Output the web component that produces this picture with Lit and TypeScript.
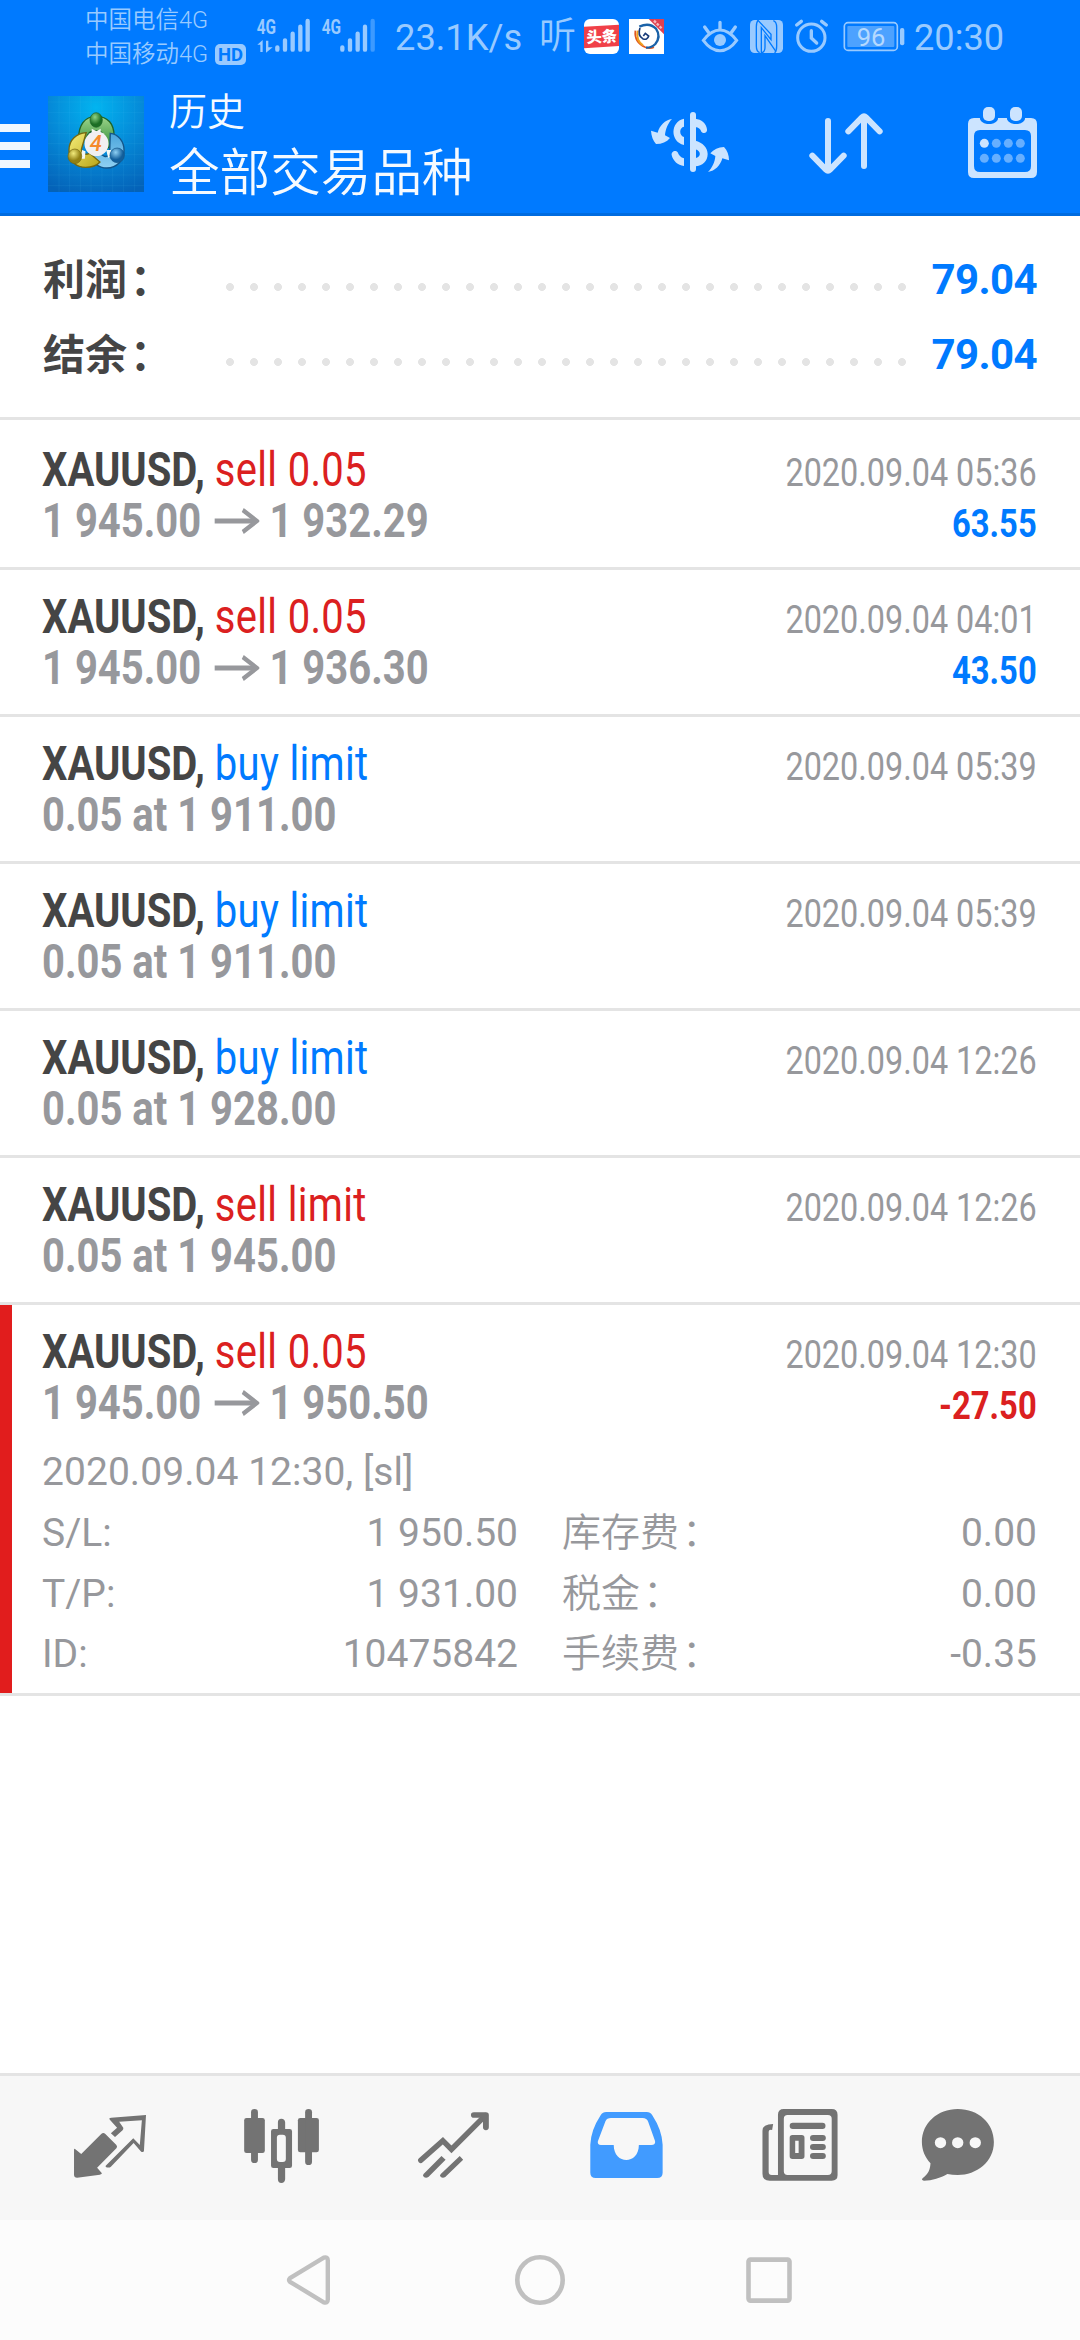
import { LitElement, html, css, svg, nothing } from "lit";
import { customElement, property } from "lit/decorators.js";

interface Detail {
  label: string;
  value: string;
}

interface Deal {
  symbol: string;
  action: string;
  side: "buy" | "sell";
  open: string;
  close?: string;
  time: string;
  profit?: string;
  note?: string;
  left?: Detail[];
  right?: Detail[];
}

const DEALS: Deal[] = [
  { symbol: "XAUUSD,", action: "sell 0.05", side: "sell", open: "1 945.00", close: "1 932.29", time: "2020.09.04 05:36", profit: "63.55" },
  { symbol: "XAUUSD,", action: "sell 0.05", side: "sell", open: "1 945.00", close: "1 936.30", time: "2020.09.04 04:01", profit: "43.50" },
  { symbol: "XAUUSD,", action: "buy limit", side: "buy", open: "0.05 at 1 911.00", time: "2020.09.04 05:39" },
  { symbol: "XAUUSD,", action: "buy limit", side: "buy", open: "0.05 at 1 911.00", time: "2020.09.04 05:39" },
  { symbol: "XAUUSD,", action: "buy limit", side: "buy", open: "0.05 at 1 928.00", time: "2020.09.04 12:26" },
  { symbol: "XAUUSD,", action: "sell limit", side: "sell", open: "0.05 at 1 945.00", time: "2020.09.04 12:26" },
  {
    symbol: "XAUUSD,",
    action: "sell 0.05",
    side: "sell",
    open: "1 945.00",
    close: "1 950.50",
    time: "2020.09.04 12:30",
    profit: "-27.50",
    note: "2020.09.04 12:30, [sl]",
    left: [
      { label: "S/L:", value: "1 950.50" },
      { label: "T/P:", value: "1 931.00" },
      { label: "ID:", value: "10475842" },
    ],
    right: [
      { label: "库存费", value: "0.00" },
      { label: "税金", value: "0.00" },
      { label: "手续费", value: "-0.35" },
    ],
  },
];

@customElement("status-bar")
class StatusBar extends LitElement {
  static styles = css`
    :host {
      display: flex;
      height: 72px;
      color: #99caff;
      font-family: Roboto, "Noto Sans CJK SC", sans-serif;
      white-space: nowrap;
    }
    svg {
      display: block;
      flex: none;
    }
    .carriers {
      width: 171px;
      padding: 3px 0 0 85px;
      font-size: 23.5px;
      font-weight: 350;
      line-height: 34px;
    }
    .line {
      display: flex;
      align-items: center;
    }
    .hd {
      margin-left: 7px;
    }
    .speed {
      width: 144px;
      margin-left: 2px;
      font-size: 36.3px;
      line-height: 75px;
    }
    .listen {
      width: 45px;
      font-size: 37px;
      line-height: 73px;
      font-weight: 350;
    }
    .clock {
      margin-left: 9px;
      font-size: 36.2px;
      line-height: 75px;
    }
  `;

  render() {
    return html`
      <div class="carriers">
        <div class="line">中国电信4G</div>
        <div class="line">
          中国移动4G
          <svg class="hd" width="31" height="21" viewBox="0 0 31 21">
            <rect width="31" height="21" rx="5" fill="#99caff" />
            <text x="15.5" y="17" text-anchor="middle" font-family="Roboto" font-size="18.5" font-weight="700" fill="#007aff">HD</text>
          </svg>
        </div>
      </div>
      <svg width="65" height="72" viewBox="588 0 195 216" fill="#99caff">
        <text x="590" y="101" font-family="Roboto" font-size="61" font-weight="700" textLength="58" lengthAdjust="spacingAndGlyphs">4G</text>
        <path d="M601 156v-22h-9l16-14v36zM618 122h7v20h13l-20 16z" />
        <path d="M652 142v7M675 121v28M698 101v48M721 80v69M743 63v86" stroke="#99caff" stroke-width="13" stroke-linecap="round" />
      </svg>
      <svg width="72" height="72" viewBox="783 0 216 216" fill="#99caff">
        <text x="785" y="101" font-family="Roboto" font-size="61" font-weight="700" textLength="58" lengthAdjust="spacingAndGlyphs">4G</text>
        <path d="M847 142v7M870 121v28M893 101v48M915 80v69" stroke="#99caff" stroke-width="13" stroke-linecap="round" />
        <path d="M938 63v86" stroke="#3d9aff" stroke-width="13" stroke-linecap="round" />
      </svg>
      <span class="speed">23.1K/s</span>
      <span class="listen">听</span>
      <svg width="45" height="72" viewBox="612 0 135 216">
        <rect x="612" y="57" width="105" height="105" rx="18" fill="#fff" />
        <path d="M612 80l105-6v64l-105 7z" fill="#f04048" />
        <text x="665" y="127" text-anchor="middle" font-family="Noto Sans CJK SC" font-size="46" font-weight="900" fill="#fff" transform="rotate(-3 665 110)">头条</text>
      </svg>
      <svg width="71" height="72" viewBox="747 0 213 216" fill="none">
        <rect x="747" y="57" width="105" height="105" fill="#fff" />
        <path d="M806 57h46v46z" fill="#e04050" />
        <path d="M822 62l24 24" stroke="#f6b8bd" stroke-width="7" stroke-dasharray="8 4" />
        <path d="M766 92q-4 36 30 50 14 5 26 0" stroke="#e2571e" stroke-width="5" />
        <path d="M773 92q-6 30 16 44" stroke="#f0a01e" stroke-width="6" />
        <path d="M778 80q30-14 50 6 16 24-2 46-12 12-28 11" stroke="#1a62a8" stroke-width="7" />
        <path d="M780 84q-8 22 8 32 14 6 18-8l-10-8-6 8" stroke="#183a78" stroke-width="5" />
      </svg>
      <svg width="48" height="72" viewBox="54 0 144 216" fill="none" stroke="#99caff" stroke-width="9" stroke-linecap="round">
        <path d="M64 121q24-31 50-31t50 31q-22 31-50 31t-50-31z" />
        <path d="M114 67v20M68 81l13 18M160 81l-13 18" stroke-width="10" />
        <circle cx="114" cy="120" r="18" fill="#99caff" stroke="none" />
      </svg>
      <svg width="44" height="72" viewBox="198 0 132 216">
        <rect x="204" y="60" width="99" height="99" rx="14" fill="#99caff" />
        <path d="M229 60q-6 6-6 20v58q0 16 10 20M278 159q6-6 6-20V82q0-16-10-20" fill="none" stroke="#007aff" stroke-width="4" />
        <path d="M228 61l39 42v16l-29-36v74h4q7-3 7-16v-34l33 48" fill="none" stroke="#007aff" stroke-width="4" />
      </svg>
      <svg width="51" height="72" viewBox="330 0 153 216" fill="none" stroke="#99caff" stroke-linecap="round">
        <circle cx="388" cy="113" r="41" stroke-width="9" />
        <path d="M388 92v22l16 15" stroke-width="10" />
        <path d="M344 75l14-11M433 75l-14-11" stroke-width="10" />
      </svg>
      <svg width="62" height="72" viewBox="483 0 186 216">
        <rect x="487" y="68" width="159" height="83" rx="11" fill="none" stroke="#99caff" stroke-width="5" />
        <rect x="496" y="78" width="141" height="63" rx="3" fill="#4da2ff" />
        <rect x="654" y="84" width="13" height="52" rx="6" fill="#99caff" />
        <text x="567" y="138" text-anchor="middle" font-family="Roboto" font-size="79" textLength="86" lengthAdjust="spacingAndGlyphs" fill="#b4d9ff">96</text>
      </svg>
      <span class="clock">20:30</span>
    `;
  }
}

@customElement("app-header")
class AppHeader extends LitElement {
  static styles = css`
    :host {
      display: flex;
      height: 141px;
      border-bottom: 3px solid #006ce0;
      color: #f5faff;
      font-family: Roboto, "Noto Sans CJK SC", sans-serif;
    }
    svg {
      display: block;
      flex: none;
    }
    .burger {
      width: 30px;
      display: flex;
      flex-direction: column;
      gap: 10px;
      padding-top: 52px;
    }
    .burger i {
      height: 8px;
      background: #f0f7ff;
    }
    .logo {
      margin: 24px 25px 0 18px;
    }
    .titles {
      flex: 1;
      font-weight: 350;
      white-space: nowrap;
    }
    .small {
      margin-top: 18px;
      font-size: 38px;
      line-height: 44px;
    }
    .big {
      font-size: 50.6px;
      line-height: 80px;
    }
    .actions {
      display: flex;
      gap: 66px;
      padding: 25px 33px 0 0;
    }
  `;

  render() {
    return html`
      <div class="burger"><i></i><i></i><i></i></div>
      <svg class="logo" width="96" height="96" viewBox="139 78 279 288" preserveAspectRatio="none">
        <defs>
          <radialGradient id="sky" cx=".5" cy=".12" r=".95">
            <stop offset="0" stop-color="#02b4f0" />
            <stop offset=".5" stop-color="#058ad8" />
            <stop offset="1" stop-color="#0462b8" />
          </radialGradient>
          <linearGradient id="green" x2="0" y2="1">
            <stop offset="0" stop-color="#9fd68c" />
            <stop offset="1" stop-color="#2c8a35" />
          </linearGradient>
          <linearGradient id="yellow" x2="1" y2="1">
            <stop offset="0" stop-color="#f5ee7a" />
            <stop offset="1" stop-color="#b9a416" />
          </linearGradient>
          <linearGradient id="blue" x2="0" y2="1">
            <stop offset="0" stop-color="#4aa5dc" />
            <stop offset="1" stop-color="#8fd0f2" />
          </linearGradient>
          <radialGradient id="ballGreen" cx=".4" cy=".3"><stop offset="0" stop-color="#8fd486" /><stop offset="1" stop-color="#1c6e24" /></radialGradient>
          <radialGradient id="ballYellow" cx=".4" cy=".3"><stop offset="0" stop-color="#f1ea7c" /><stop offset="1" stop-color="#918013" /></radialGradient>
          <radialGradient id="ballBlue" cx=".4" cy=".3"><stop offset="0" stop-color="#8ed0f4" /><stop offset="1" stop-color="#125f9c" /></radialGradient>
        </defs>
        <rect x="139" y="78" width="279" height="288" fill="url(#sky)" />
        <path
          d="M171 78v288M202 78v288M233 78v288M264 78v288M296 78v288M327 78v288M358 78v288M390 78v288M139 96h279M139 127h279M139 159h279M139 190h279M139 221h279M139 253h279M139 284h279M139 315h279M139 347h279"
          stroke="#5cc8f5" stroke-opacity=".14" stroke-width="2"
        />
        <path d="M228 205c0-38 16-66 51-66s52 24 52 58c0 20-8 30-20 38l-18-28c8-14 6-24-14-24s-24 6-28 22z" fill="url(#green)" stroke="#1e6428" stroke-width="4" />
        <path d="M320 190c24 2 40 26 40 50 0 30-20 54-50 54-24 0-44-16-52-42l30-6c8 14 22 18 30 8z" fill="url(#blue)" stroke="#14568a" stroke-width="4" />
        <path d="M250 188c-28 2-50 22-50 52 0 36 24 52 48 52 18 0 32-4 42-16l-30-26c-14 6-24 2-24-12z" fill="url(#yellow)" stroke="#76680f" stroke-width="4" />
        <path d="M266 176l14 8 12-8v12h-26zM238 240l10 4-2 22h-12zM308 240l14 0 0 18-8 6z" fill="#f4f8f4" />
        <ellipse cx="279" cy="150" rx="18" ry="22" fill="url(#ballGreen)" stroke="#1e6428" stroke-width="2" />
        <ellipse cx="217" cy="259" rx="20" ry="22" fill="url(#ballYellow)" stroke="#76680f" stroke-width="2" />
        <ellipse cx="340" cy="256" rx="21" ry="22" fill="url(#ballBlue)" stroke="#14568a" stroke-width="2" />
        <ellipse cx="280" cy="221" rx="35" ry="37" fill="#f1f0f2" />
        <text x="278" y="243" text-anchor="middle" font-family="Roboto" font-size="64" font-style="italic" font-weight="500" fill="#f58a2c">4</text>
      </svg>
      <div class="titles">
        <div class="small">历史</div>
        <div class="big">全部交易品种</div>
      </div>
      <div class="actions">
        <svg width="90" height="90" viewBox="75 81 270 270" fill="#cce4ff">
          <path d="M156 147c-12 12-20 32-21 49l15 8c-10 12-24 18-42 18-9-10-14-24-15-40l20 6c6-22 22-38 43-41z" />
          <path d="M264 306c12-12 21-30 22-48l-15-8c10-12 24-18 41-19 10 10 15 24 15 40l-20-6c-6 22-22 38-43 41z" />
          <path d="M219 135v162" stroke="#cce4ff" stroke-width="18" stroke-linecap="round" />
          <path d="M192 146v24c-14 2-16 26 0 31v24c-42-10-42-70 0-79zM192 288v-23c-10-2-16-9-19-18-6-9-20-3-18 8 4 18 18 30 37 33z" />
          <path d="M226 146c18 2 33 14 35 32 2 11-11 15-17 7-3-8-8-13-18-14zM226 212c22 6 37 20 37 40 0 22-16 36-37 37v-24c18-4 18-22 0-27z" />
        </svg>
        <svg width="90" height="90" viewBox="543 81 270 270" fill="none" stroke="#cce4ff" stroke-width="18" stroke-linecap="round">
          <path d="M624 153v148M577 257l41 42q6 6 12 0l41-42M732 288V140M685 184l41-42q6-6 12 0l41 42" />
        </svg>
        <svg width="90" height="90" viewBox="1011 81 270 270">
          <path fill="#cce4ff" fill-rule="evenodd" d="M1062 144h171q18 0 18 18v144q0 18-18 18h-171q-18 0-18-18V162q0-18 18-18zM1080 180q-18 0-18 18v90q0 18 18 18h135q18 0 18-18v-90q0-18-18-18z" />
          <rect x="1079" y="102" width="56" height="60" rx="22" fill="#007aff" />
          <rect x="1160" y="102" width="56" height="60" rx="22" fill="#007aff" />
          <rect x="1089" y="111" width="36" height="42" rx="15" fill="#cce4ff" />
          <rect x="1170" y="111" width="36" height="42" rx="15" fill="#cce4ff" />
          <circle cx="1093" cy="220" r="13.5" fill="#cce4ff" />
          ${[[1129, 220], [1165, 220], [1201, 220], [1093, 265], [1129, 265], [1165, 265], [1201, 265]].map(
            ([x, y]) => svg`<circle cx=${x} cy=${y} r="13.5" fill="#66afff" />`
          )}
        </svg>
      </div>
    `;
  }
}

@customElement("balance-summary")
class BalanceSummary extends LitElement {
  static styles = css`
    :host {
      display: block;
      height: 204px;
      box-sizing: border-box;
      padding: 26px 43px 0;
      border-bottom: 3px solid #e4e4e4;
      font-family: Roboto, "Noto Sans CJK SC", sans-serif;
      font-size: 42px;
      font-weight: 700;
      line-height: 75px;
    }
    .row {
      display: flex;
      height: 75px;
    }
    .label {
      width: 183px;
      padding-top: 1px;
      color: #454545;
    }
    .colon {
      margin-left: 3px;
    }
    .dots {
      width: 680px;
      height: 8px;
      margin-top: 41px;
      background: radial-gradient(circle at 4px 4px, #e4e4e4 3.6px, transparent 4.3px) 0 0 / 24px 8px repeat-x;
    }
    .value {
      flex: 1;
      text-align: right;
      letter-spacing: -0.6px;
      color: #007aff;
    }
  `;

  render() {
    return html`${["利润", "结余"].map(
      (label) =>
        html`<div class="row"><span class="label">${label}<span class="colon">：</span></span><span class="dots"></span><span class="value">79.04</span></div>`
    )}`;
  }
}

@customElement("deal-row")
class DealRow extends LitElement {
  @property({ attribute: false }) deal!: Deal;

  static styles = css`
    :host {
      display: block;
      border-bottom: 3px solid #e4e4e4;
      color: #97989c;
      font-family: Roboto, "Noto Sans CJK SC", sans-serif;
      white-space: nowrap;
    }
    .body {
      padding: 21px 43px 0 42px;
      height: 123px;
    }
    .open {
      height: 367px;
      border-left: 12px solid #e11d1d;
      padding-left: 30px;
    }
    .main {
      display: flex;
      justify-content: space-between;
      height: 105px;
    }
    .left {
      transform: scaleX(0.833);
      transform-origin: 0 0;
      font-size: 48px;
      line-height: 51px;
      font-weight: 700;
    }
    .right {
      font-size: 39px;
      line-height: 51px;
      padding-top: 4px;
      text-align: right;
    }
    .time {
      transform: scaleX(0.83);
      transform-origin: 100% 0;
    }
    .profit {
      font-weight: 700;
      transform: scaleX(0.84);
      transform-origin: 100% 0;
    }
    .symbol {
      color: #454545;
    }
    .action {
      font-weight: 400;
      letter-spacing: 0.4px;
    }
    .buy {
      color: #007aff;
    }
    .sell {
      color: #db2020;
    }
    .prices {
      display: flex;
      align-items: center;
    }
    .arrow {
      margin: 0 12px 0 16px;
    }
    .note,
    .grid {
      font-size: 39px;
      line-height: 60.7px;
    }
    .note {
      margin-top: 10.5px;
      letter-spacing: 0.05px;
    }
    .grid {
      display: grid;
      grid-template-columns: 476px 475px;
      column-gap: 44px;
      padding-top: 0.6px;
    }
    .pair {
      display: flex;
      justify-content: space-between;
    }
    .fee {
      font-weight: 350;
    }
    .colon {
      margin-left: 3px;
    }
  `;

  render() {
    const d = this.deal;
    return html`
      <div class="body ${d.note ? "open" : ""}">
        <div class="main">
          <div class="left">
            <div><span class="symbol">${d.symbol}</span> <span class="action ${d.side}">${d.action}</span></div>
            <div class="prices">
              <span>${d.open}</span>
              ${d.close
                ? html`<svg class="arrow" width="54" height="26" viewBox="0 0 54 26" fill="none" stroke="#97989c" stroke-width="5">
                      <path d="M0 13h50" />
                      <path d="M34 2l17 11-17 11" stroke-width="4.5" />
                    </svg><span>${d.close}</span>`
                : nothing}
            </div>
          </div>
          <div class="right">
            <div class="time">${d.time}</div>
            ${d.profit ? html`<div class="profit ${d.profit.startsWith("-") ? "sell" : "buy"}">${d.profit}</div>` : nothing}
          </div>
        </div>
        ${d.note
          ? html`<div class="note">${d.note}</div>
              <div class="grid">
                ${d.left!.map((l, i) => {
                  const r = d.right![i];
                  return html`<div class="pair"><span>${l.label}</span><span>${l.value}</span></div>
                    <div class="pair"><span class="fee">${r.label}<span class="colon">：</span></span><span>${r.value}</span></div>`;
                })}
              </div>`
          : nothing}
      </div>
    `;
  }
}

@customElement("tab-bar")
class TabBar extends LitElement {
  static styles = css`
    :host {
      display: grid;
      grid-template-columns: repeat(5, 172px) 148px;
      place-items: center;
      justify-content: start;
      height: 144px;
      padding-left: 24px;
      border-top: 3px solid #e4e4e4;
      background: #f7f7f7;
    }
    svg {
      display: block;
      overflow: visible;
    }
  `;

  private icon(x: number, content: unknown) {
    return html`<svg width="90" height="90" viewBox="${x} 129 261.3 270" preserveAspectRatio="none" fill="#737373" stroke="none">${content}</svg>`;
  }

  render() {
    return html`
      ${this.icon(
        188.8,
        svg`
        <path d="M217 266l19 16 58-60q6-6 12 0l32 33q4 5 0 10l-56 58 14 17q0 3-6 4l-66 9q-9 0-9-9v-75q0-3 2-3z" />
        <path fill-rule="evenodd" d="M424 165l-6 108q-1 4-8 2l-22-26-66 71q-5 5-15 1l0-4 80-82 19 20 6-74-66 4 12 18q1 4-2 8l-22 20-12-11 18-17-21-24q-4-6 4-6z" />`
      )}
      ${this.icon(
        688.2,
        svg`
        <rect x="709" y="174" width="60" height="105" rx="7" /><rect x="729" y="147" width="20" height="162" rx="10" />
        <rect x="865" y="174" width="61" height="103" rx="7" /><rect x="886" y="147" width="20" height="168" rx="10" />
        <path fill-rule="evenodd" d="M794 207h47q7 0 7 7v103q0 7-7 7h-47q-7 0-7-7V214q0-7 7-7zM813 224q-9 0-9 9v64q0 9 9 9h8q9 0 9-9v-64q0-9-9-9z" />
        <path d="M807 210v-23q0-11 10-11t11 11v23zM807 320v38q0 11 10 11t11-11v-38z" />`
      )}
      ${this.icon(
        1187.7,
        svg`
        <g fill="none" stroke="#737373" stroke-width="16" stroke-linecap="round">
          <path d="M1222 301l64-59 25 26 98-101" /><path d="M1376 165h35v37" stroke-width="17" stroke-linejoin="round" />
        </g>
        <path d="M1230 342l52-54 12 11-50 52q-7 5-13 0-5-4-1-9zM1280 342l55-54 10 11-52 52q-7 5-13 0-5-4 0-9z" />`
      )}
      ${this.icon(
        119,
        svg`
        <path fill="#419bff" fill-rule="evenodd" d="M192 156h118q10 0 16 10 28 44 30 88v84q0 16-16 16H162q-16 0-16-16v-84q2-44 30-88 6-10 16-10zM206 174q-12 0-16 10l-22 60q-2 11 9 11h37c0 60 73 60 73 0h36q13 0 11-12l-20-58q-4-11-16-11z" />`
      )}
      ${this.icon(
        618.5,
        svg`
        <path fill-rule="evenodd" d="M708 147h139q17 0 17 17v182q0 16-17 16H667q-21 0-21-21V212q0-20 31-20l-3 18q-10-2-10 5v121q0 9 9 9h18V164q0-17 17-17zM719 165q-11 0-11 11v158q0 11 11 11h117q11 0 11-11V176q0-11-11-11z" />
        <rect x="725" y="188" width="104" height="19" rx="9" />
        <path fill-rule="evenodd" d="M733 225h27q8 0 8 8v56q0 8-8 8h-27q-8 0-8-8v-56q0-8 8-8zM741 242v37h10v-37z" />
        <rect x="784" y="225" width="46" height="18" rx="9" /><rect x="784" y="252" width="46" height="18" rx="9" /><rect x="784" y="279" width="46" height="18" rx="9" />`
      )}
      ${this.icon(
        1083.2,
        svg`
        <path d="M1213 147c60 0 105 42 105 99 0 60-50 99-105 99q-16 0-30-3c-20 12-44 20-68 20q-9-1-4-7c18-14 22-28 23-45-16-18-25-40-25-64 0-57 46-99 104-99z" />
        <g fill="#f7f7f7"><circle cx="1163" cy="248" r="16.5" /><circle cx="1213" cy="248" r="16.5" /><circle cx="1264" cy="248" r="16.5" /></g>`
      )}
    `;
  }
}

@customElement("system-nav")
class SystemNav extends LitElement {
  static styles = css`
    :host {
      display: flex;
      justify-content: center;
      align-items: center;
      gap: 170px;
      height: 120px;
      background: #fcfcfc;
    }
  `;

  render() {
    return html`
      <svg width="60" height="60" viewBox="-30 -30 60 60" fill="none" stroke="#c0c0c0" stroke-width="4.4" stroke-linejoin="round">
        <path d="M-20 -1.8L13.8 -22.3Q17.8 -23.5 17.8 -19.5V19.5Q17.8 23.5 13.8 22.3L-20 1.8Q-22 0 -20 -1.8z" />
      </svg>
      <svg width="60" height="60" viewBox="-30 -30 60 60" fill="none" stroke="#c0c0c0" stroke-width="4.6"><circle r="22.7" /></svg>
      <svg width="60" height="60" viewBox="-30 -30 60 60" fill="none" stroke="#c0c0c0" stroke-width="4.6">
        <rect x="-21.5" y="-20.4" width="41" height="41" rx="2" />
      </svg>
    `;
  }
}

@customElement("app-root")
class AppRoot extends LitElement {
  static styles = css`
    :host {
      display: flex;
      flex-direction: column;
      width: 1080px;
      height: 2340px;
      overflow: hidden;
      background: #fff;
    }
    .top {
      background: #007aff;
    }
    .list {
      flex: 1;
      padding-top: 3px;
    }
  `;

  render() {
    return html`
      <div class="top">
        <status-bar></status-bar>
        <app-header></app-header>
      </div>
      <balance-summary></balance-summary>
      <div class="list">${DEALS.map((d) => html`<deal-row .deal=${d}></deal-row>`)}</div>
      <tab-bar></tab-bar>
      <system-nav></system-nav>
    `;
  }
}
